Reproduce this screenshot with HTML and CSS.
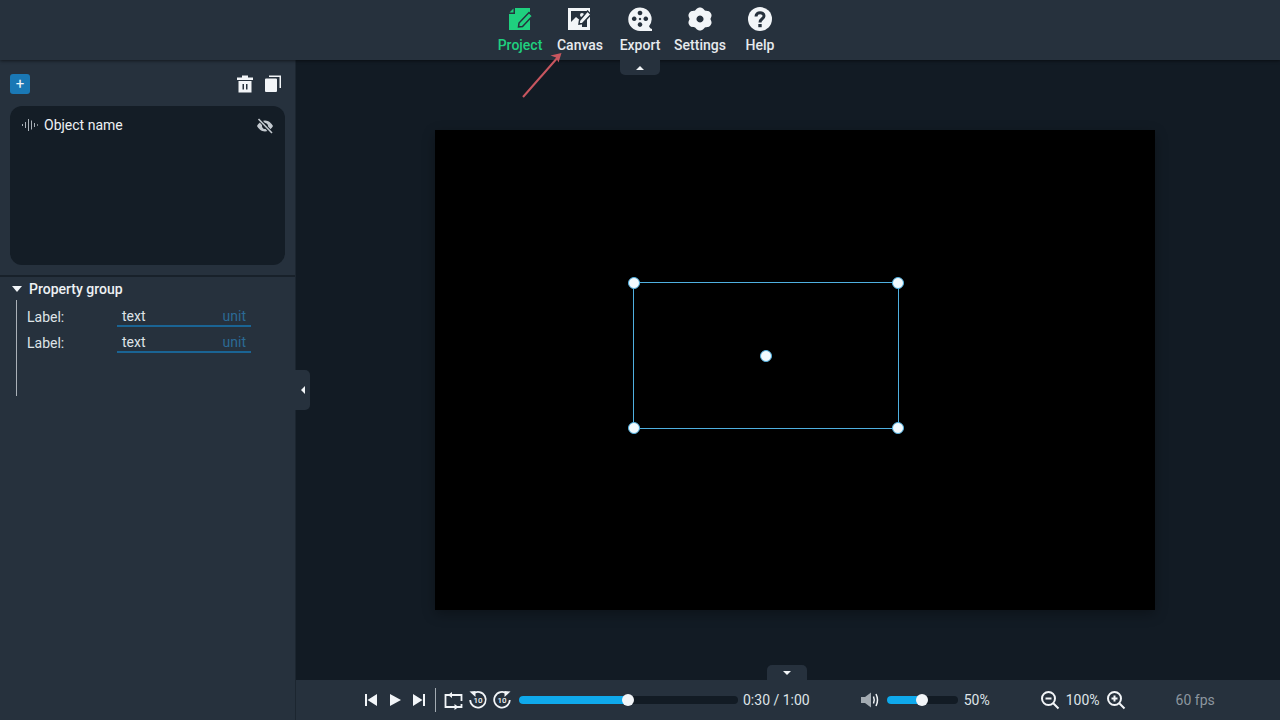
FILE: index.html
```html
<!DOCTYPE html>
<html lang="en">
<head>
    <meta charset="UTF-8">
    <title>Editor</title>
    <link rel="stylesheet" href="styles.css">
</head>
<body>
    <header class="top-bar">
        <div class="nav-item active">
            <svg class="nav-icon" viewBox="0 0 24 24"><path fill="#1fd07f" d="M7 1H22V23H1V7H7ZM1.500 5.500L5.500 1.500V5.500Z"/><path fill="#1fd07f" stroke="#26313d" stroke-width="1.500" d="M21 5.500L24.500 9L14.500 19.500L10.500 20L11 16Z"/></svg>
            <span>Project</span>
        </div>
        <div class="nav-item">
            <svg class="nav-icon" viewBox="0 0 24 24"><rect x="0" y="1" width="22" height="22" fill="#f2f5f8"/><rect x="3" y="4" width="16" height="16" fill="#26313d"/><path fill="#f2f5f8" d="M3 15L8 10L14 15V20H3Z"/><circle cx="14" cy="8" r="2" fill="#f2f5f8"/><path fill="#f2f5f8" stroke="#26313d" stroke-width="1.500" d="M19.500 4L23 7.500L14.500 16.500L11 17L11.500 13.500Z"/></svg>
            <span>Canvas</span>
        </div>
        <div class="nav-item">
            <svg class="nav-icon" viewBox="0 0 24 24"><path fill="#f2f5f8" fill-rule="evenodd" d="M12 0.500A11.500 11.500 0 0 1 21 19.200Q22 21.800 24 22V24H12A11.750 11.750 0 0 1 12 0.500ZM12 3.700A2.300 2.300 0 1 0 12.010 3.700ZM12 15.300A2.300 2.300 0 1 0 12.010 15.300ZM6.200 9.500A2.300 2.300 0 1 0 6.210 9.500ZM17.800 9.500A2.300 2.300 0 1 0 17.810 9.500ZM12 10.800A1.200 1.200 0 1 0 12.010 10.800Z"/></svg>
            <span>Export</span>
        </div>
        <div class="nav-item">
            <svg class="nav-icon" viewBox="0 0 24 24"><path fill="#f2f5f8" fill-rule="evenodd" d="M12 0.500C15 0.500 16 3 17 3.500C18.500 4 21.500 3.500 23 6.500C24.500 9.500 22.500 10.500 22.500 12C22.500 13.500 24.500 14.500 23 17.500C21.500 20.500 18.500 20 17 20.500C16 21 15 23.500 12 23.500C9 23.500 8 21 7 20.500C5.500 20 2.500 20.500 1 17.500C-0.500 14.500 1.500 13.500 1.500 12C1.500 10.500 -0.500 9.500 1 6.500C2.500 3.500 5.500 4 7 3.500C8 3 9 0.500 12 0.500ZM12 8.500A3.500 3.500 0 1 0 12.010 8.500Z"/></svg>
            <span>Settings</span>
        </div>
        <div class="nav-item">
            <svg class="nav-icon" viewBox="0 0 24 24"><circle cx="12" cy="12" r="12" fill="#f2f5f8"/><path fill="none" stroke="#26313d" stroke-width="3" d="M8 9.500C8 4.500 16 4.500 16 9C16 12 12 11.500 12 15.500"/><rect x="10.300" y="17" width="3.400" height="3.200" fill="#26313d"/></svg>
            <span>Help</span>
        </div>
    </header>
    <div class="tab tab-top"><span class="tri-up"></span></div>

    <div class="workspace">
        <aside class="side-panel">
            <div class="side-tools">
                <button class="add-btn">+</button>
                <div class="side-actions">
                    <svg class="icon-18" viewBox="0 0 18 18"><path fill="#f2f5f8" fill-rule="evenodd" d="M6 0.500H12V2.500H17V5H1V2.500H6ZM2.500 6H15.500V17.500H2.500ZM6.500 9V14.500H8V9ZM10 9V14.500H11.500V9Z"/></svg>
                    <svg class="icon-18" viewBox="0 0 18 18"><path fill="#f2f5f8" d="M1 4.500Q1 3.500 2 3.500H12Q13 3.500 13 4.500V16Q13 17 12 17H2Q1 17 1 16ZM5 0.500H17V13H15.500V2H5Z"/></svg>
                </div>
            </div>
            <div class="object-list">
                <div class="object-row">
                    <svg class="icon-16" viewBox="0 0 16 16"><path stroke="#aab1b8" stroke-width="1" d="M0.500 7V9M3.500 5V11M6.500 2V14M9.500 3.500V12.500M12.500 6V10M15.500 7.300V8.700"/></svg>
                    <span class="object-name">Object name</span>
                    <svg class="icon-eye" viewBox="0 0 16 16"><path fill="#c3c9cf" fill-rule="evenodd" d="M8 2.500C12 2.500 14.500 5.500 16 8C14.500 10.500 12 13.500 8 13.500C4 13.500 1.500 10.500 0 8C1.500 5.500 4 2.500 8 2.500ZM8 5A3 3 0 1 0 8.010 5Z"/><path stroke="#141d26" stroke-width="3.500" d="M2 1L14.500 15"/><path stroke="#c3c9cf" stroke-width="1.600" d="M1.500 1L15 15"/></svg>
                </div>
            </div>
            <div class="prop-group">
                <div class="prop-title"><span class="tri-down"></span>Property group</div>
                <div class="prop-body">
                    <div class="prop-row">
                        <label>Label:</label>
                        <div class="prop-input"><span>text</span><span class="unit">unit</span></div>
                    </div>
                    <div class="prop-row">
                        <label>Label:</label>
                        <div class="prop-input"><span>text</span><span class="unit">unit</span></div>
                    </div>
                </div>
            </div>
            <div class="tab tab-side"><span class="tri-left"></span></div>
        </aside>

        <main class="stage-column">
            <div class="stage">
                <div class="canvas">
                    <div class="selection">
                        <span class="handle h-tl"></span>
                        <span class="handle h-tr"></span>
                        <span class="handle h-bl"></span>
                        <span class="handle h-br"></span>
                        <span class="handle h-c"></span>
                    </div>
                </div>
                <div class="tab tab-bottom"><span class="tri-down small"></span></div>
            </div>
            <footer class="player">
                <svg class="icon-18" viewBox="0 0 18 18"><path fill="#f2f5f8" d="M3 3H5V15H3ZM15 3V15L5.500 9Z"/></svg>
                <svg class="icon-18 gap-6" viewBox="0 0 18 18"><path fill="#f2f5f8" d="M4 3L15 9L4 15Z"/></svg>
                <svg class="icon-18 gap-6" viewBox="0 0 18 18"><path fill="#f2f5f8" d="M13 3H15V15H13ZM3 3V15L12.500 9Z"/></svg>
                <span class="divider"></span>
                <svg class="icon-20 gap-7" viewBox="0 0 20 20"><path fill="none" stroke="#f2f5f8" stroke-width="1.800" d="M18.500 11V5H2.500V17H18.500V14"/><path fill="#f2f5f8" d="M5 5L9 2V8ZM15.500 17L11.500 14V20Z"/></svg>
                <svg class="icon-20 gap-5" viewBox="0 0 20 20"><path fill="none" stroke="#f2f5f8" stroke-width="1.800" d="M5 3.800A7.800 7.800 0 1 1 2.200 10"/><path fill="#f2f5f8" d="M1.500 1.500L7.500 1V7Z"/><text class="skip-text" x="10" y="13" text-anchor="middle">10</text></svg>
                <svg class="icon-20 gap-4" viewBox="0 0 20 20"><path fill="none" stroke="#f2f5f8" stroke-width="1.800" d="M15 3.800A7.800 7.800 0 1 0 17.800 10"/><path fill="#f2f5f8" d="M18.500 1.500L12.500 1V7Z"/><text class="skip-text" x="10" y="13" text-anchor="middle">10</text></svg>
                <div class="slider seek"><div class="slider-fill" style="width: 50%"></div><span class="slider-thumb" style="left: 49.800%"></span></div>
                <span class="time">0:30 / 1:00</span>
                <svg class="icon-20 gap-volume" viewBox="0 0 20 20"><path fill="#a3abb2" d="M1 7H5L11 2.500V17.500L5 13H1Z"/><path fill="none" stroke="#f2f5f8" stroke-width="1.500" d="M13.500 6.500Q15 10 13.500 13.500M16 4Q19 10 16 16"/></svg>
                <div class="slider volume"><div class="slider-fill" style="width: 50%"></div><span class="slider-thumb" style="left: 50%"></span></div>
                <span class="volume-value">50%</span>
                <svg class="icon-20 gap-zoom" viewBox="0 0 20 20"><circle cx="8.500" cy="8.500" r="6.500" fill="none" stroke="#f2f5f8" stroke-width="2"/><path stroke="#f2f5f8" stroke-width="2" d="M5.500 8.500H11.500M13 13L18.500 18.500"/></svg>
                <span class="zoom-value">100%</span>
                <svg class="icon-20 gap-zoom-in" viewBox="0 0 20 20"><circle cx="8.500" cy="8.500" r="6.500" fill="none" stroke="#f2f5f8" stroke-width="2"/><path stroke="#f2f5f8" stroke-width="2" d="M5.500 8.500H11.500M8.500 5.500V11.500M13 13L18.500 18.500"/></svg>
                <span class="fps">60 fps</span>
            </footer>
        </main>
    </div>

    <svg class="arrow" viewBox="0 0 50 56" width="50" height="56"><path fill="none" stroke="#c8565f" stroke-width="2" d="M3 53L39 12"/><path fill="#c8565f" d="M41.500 9L30.500 11.500L36 13.500L38.500 18.500Z"/></svg>
</body>
</html>
```

FILE: styles.css
```css
* {
    box-sizing: border-box;
}

html, body {
    height: 100%;
}

body {
    margin: 0;
    display: flex;
    flex-direction: column;
    overflow: hidden;
    background-color: #121b24;
    color: #eef1f4;
    font-family: Roboto, sans-serif;
    font-size: 14px;
}

svg {
    display: block;
    flex: none;
}

/* Top bar */
.top-bar {
    position: relative;
    z-index: 2;
    display: flex;
    justify-content: center;
    height: 60px;
    background-color: #26313d;
    box-shadow: 0 1px 3px rgba(0, 0, 0, 0.5);
}

.nav-item {
    display: flex;
    flex-direction: column;
    align-items: center;
    width: 60px;
    padding-top: 7px;
    font-weight: 500;
    line-height: 16px;
    color: #e6eaee;
}

.nav-item.active {
    color: #1fd07f;
}

.nav-icon {
    width: 24px;
    height: 24px;
    margin-bottom: 6px;
}

.tab {
    position: absolute;
    display: flex;
    align-items: center;
    justify-content: center;
    background-color: #26313d;
}

.tab-top {
    top: 60px;
    left: 620px;
    z-index: 2;
    width: 40px;
    height: 15px;
    border-radius: 0 0 5px 5px;
}

.tab-side {
    top: 310px;
    left: 100%;
    width: 15px;
    height: 40px;
    border-radius: 0 5px 5px 0;
}

.tab-bottom {
    left: 471px;
    bottom: 0;
    width: 40px;
    height: 15px;
    border-radius: 5px 5px 0 0;
}

.tri-up,
.tri-down,
.tri-left {
    width: 0;
    height: 0;
    border-style: solid;
    border-color: transparent;
}

.tri-up {
    border-width: 0 4px 4px;
    border-bottom-color: #f2f5f8;
}

.tri-down {
    border-width: 6px 5px 0;
    border-top-color: #f2f5f8;
}

.tri-down.small {
    border-width: 4px 4px 0;
}

.tri-left {
    border-width: 4px 4px 4px 0;
    border-right-color: #f2f5f8;
}

.workspace {
    flex: 1;
    display: flex;
    min-height: 0;
}

/* Left panel */
.side-panel {
    position: relative;
    z-index: 1;
    width: 296px;
    background-color: #26313d;
    border-right: 1px solid #1c2630;
}

.side-tools {
    display: flex;
    align-items: flex-start;
    justify-content: space-between;
    height: 46px;
    padding: 14px 13px 0 10px;
}

.add-btn {
    width: 20px;
    height: 20px;
    padding: 0;
    border: none;
    border-radius: 3px;
    background-color: #1a78b5;
    color: #f2f5f8;
    font-family: Roboto, sans-serif;
    font-size: 15px;
    line-height: 20px;
}

.side-actions {
    display: flex;
    gap: 10px;
    margin-top: 1px;
}

.icon-18 {
    width: 18px;
    height: 18px;
}

.icon-20 {
    width: 20px;
    height: 20px;
}

.icon-16 {
    width: 16px;
    height: 16px;
}

.object-list {
    height: 159px;
    margin-left: 10px;
    width: 275px;
    border-radius: 12px;
    background-color: #141d26;
}

.object-row {
    display: flex;
    align-items: center;
    height: 38px;
    padding: 0 12px;
}

.object-name {
    flex: 1;
    margin-left: 6px;
}

.icon-eye {
    width: 16px;
    height: 16px;
    margin-top: 2px;
}

.prop-group {
    margin-top: 10px;
    border-top: 2px solid #18212a;
}

.prop-title {
    display: flex;
    align-items: center;
    height: 22px;
    margin-top: 1px;
    padding-left: 12px;
    font-weight: 500;
}

.prop-title .tri-down {
    margin-right: 7px;
}

.prop-body {
    height: 96px;
    margin-left: 16px;
    padding-top: 4px;
    border-left: 1px solid #aab1b8;
}

.prop-row {
    display: flex;
    align-items: center;
    height: 26px;
    padding-left: 10px;
    color: #dfe4e8;
}

.prop-row label {
    width: 90px;
}

.prop-input {
    display: flex;
    justify-content: space-between;
    width: 134px;
    height: 20px;
    padding: 1px 5px 0;
    line-height: 16px;
    border-bottom: 2px solid #1a6494;
}

.unit {
    color: #2b6a96;
}

/* Stage */
.stage-column {
    flex: 1;
    display: flex;
    flex-direction: column;
    min-width: 0;
}

.stage {
    position: relative;
    flex: 1;
    display: flex;
    align-items: center;
    justify-content: center;
    padding-left: 14px;
}

.canvas {
    position: relative;
    width: 720px;
    height: 480px;
    background-color: #000;
    box-shadow: 0 4px 12px rgba(0, 0, 0, 0.3);
}

.selection {
    position: absolute;
    left: 198px;
    top: 152px;
    width: 266px;
    height: 147px;
    border: 1px solid #4fb0e0;
}

.handle {
    position: absolute;
    width: 12px;
    height: 12px;
    border: 1px solid #4fb0e0;
    border-radius: 50%;
    background-color: #f2fafe;
}

.h-tl { left: -6px; top: -6px; }
.h-tr { right: -6px; top: -6px; }
.h-bl { left: -6px; bottom: -6px; }
.h-br { right: -6px; bottom: -6px; }
.h-c { left: 126px; top: 67px; }

/* Player bar */
.player {
    display: flex;
    align-items: center;
    height: 40px;
    padding-left: 66px;
    background-color: #26313d;
    color: #dfe4e8;
}

.gap-6 {
    margin-left: 6px;
}

.gap-7 {
    margin-left: 7px;
}

.gap-5 {
    margin-left: 5px;
}

.gap-4 {
    margin-left: 4px;
}

.skip-text {
    fill: #f2f5f8;
    font-family: Roboto, sans-serif;
    font-size: 8px;
    font-weight: 500;
}

.divider {
    width: 1px;
    height: 24px;
    margin-left: 7px;
    background-color: #a3abb2;
}

.slider {
    position: relative;
    height: 8px;
    border-radius: 4px;
    background-color: #121b24;
}

.slider-fill {
    height: 100%;
    border-radius: 4px;
    background-color: #0fa9ec;
}

.slider-thumb {
    position: absolute;
    top: -2px;
    width: 12px;
    height: 12px;
    margin-left: -6px;
    border-radius: 50%;
    background-color: #f2f5f8;
}

.seek {
    width: 219px;
    margin-left: 7px;
}

.time {
    margin-left: 5px;
    white-space: nowrap;
}

.gap-volume {
    margin-left: 50px;
}

.volume {
    width: 71px;
    margin-left: 7px;
}

.volume-value {
    margin-left: 6px;
}

.gap-zoom {
    margin-left: 50px;
}

.zoom-value {
    margin-left: 6px;
}

.gap-zoom-in {
    margin-left: 6px;
}

.fps {
    margin-left: 50px;
    color: #8d969f;
}

.arrow {
    position: absolute;
    left: 520px;
    top: 44px;
    z-index: 3;
}
```
